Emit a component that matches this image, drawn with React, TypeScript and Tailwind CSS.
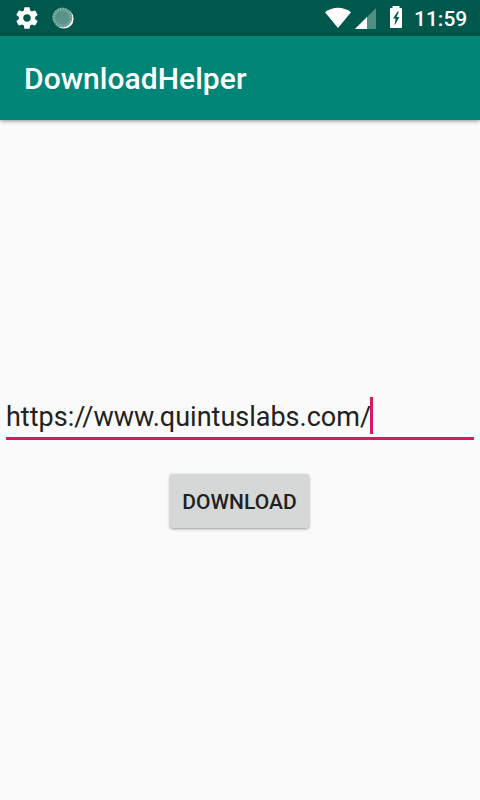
function SettingsIcon() {
  return (
    <svg className="ml-[14px] h-[26px] w-[26px] shrink-0" viewBox="0 0 24 24" fill="#fff">
      <path d="M19.43 12.98c.04-.32.07-.64.07-.98s-.03-.66-.07-.98l2.11-1.65c.19-.15.24-.42.12-.64l-2-3.46c-.12-.22-.39-.3-.61-.22l-2.49 1c-.52-.4-1.08-.73-1.69-.98l-.38-2.65C14.46 2.18 14.25 2 14 2h-4c-.25 0-.46.18-.49.42l-.38 2.65c-.61.25-1.17.59-1.69.98l-2.49-1c-.23-.09-.49 0-.61.22l-2 3.46c-.13.22-.07.49.12.64l2.11 1.65c-.04.32-.07.65-.07.98s.03.66.07.98l-2.11 1.65c-.19.15-.24.42-.12.64l2 3.46c.12.22.39.3.61.22l2.49-1c.52.4 1.08.73 1.69.98l.38 2.65c.03.24.24.42.49.42h4c.25 0 .46-.18.49-.42l.38-2.65c.61-.25 1.17-.59 1.69-.98l2.49 1c.23.09.49 0 .61-.22l2-3.46c.12-.22.07-.49-.12-.64l-2.11-1.65zM12 15.5c-1.93 0-3.500-1.570-3.500-3.500s1.570-3.500 3.500-3.500 3.500 1.570 3.500 3.500-1.570 3.500-3.500 3.500z" />
    </svg>
  );
}

function SyncIcon() {
  return (
    <svg className="ml-[11px] h-[24px] w-[24px] shrink-0" viewBox="0 0 24 24">
      <circle cx="12.800" cy="12.800" r="9.800" fill="#fff" />
      <circle cx="11.300" cy="11.500" r="10" fill="#5a9488" />
      <circle cx="11.300" cy="11.500" r="8.300" fill="none" stroke="#8fb8b0" strokeWidth="2.600" strokeDasharray="1.100 1.507" />
    </svg>
  );
}

function StatusIcons() {
  return (
    <svg className="h-9 w-[84px] shrink-0" viewBox="324 0 84 36">
      <path d="M325 12.200C332.500 6.100 343.500 6.100 351 12.200L338 28Z" fill="#fff" />
      <path d="M376 8V29H355Z" fill="#4f8e83" />
      <path d="M367 17V29H355Z" fill="#fff" />
      <path
        fillRule="evenodd"
        d="M392.500 6h7v2h1.500q1 0 1 1v18q0 1-1 1h-10q-1 0-1-1v-18q0-1 1-1h1.500ZM397.700 11.500L393 18.500H395.600L394.500 25.500L399.400 17H396.600L398.900 11.500Z"
        fill="#fff"
      />
    </svg>
  );
}

export default function App() {
  return (
    <div className="flex h-[800px] w-[480px] flex-col overflow-hidden bg-[#fafafa] font-['Roboto','Liberation_Sans',sans-serif]">
      <div className="flex h-9 shrink-0 items-center bg-[#00574b] text-white">
        <SettingsIcon />
        <SyncIcon />
        <div className="ml-auto flex items-center">
          <StatusIcons />
          <span className="ml-[6px] w-[66px] whitespace-nowrap pt-[2px] text-[21px] leading-[34px] font-medium">11:59</span>
        </div>
      </div>
      <header className="flex h-[84px] shrink-0 items-center bg-[#008577] pt-[2px] pl-6 shadow-[0_1px_4px_rgba(0,0,0,0.45)]">
        <h1 className="text-[30px] leading-[36px] font-medium tracking-[0.05px] text-white">DownloadHelper</h1>
      </header>
      <main className="flex flex-col items-center px-[6px] pt-[277px]">
        <div className="flex h-[43px] w-full items-start border-b-[3px] border-[#d81b60] text-[27px] leading-[40px] text-[#212121]">
          <span className="whitespace-nowrap">https://www.quintuslabs.com/</span>
          <span className="-ml-px h-[37px] w-[3px] shrink-0 bg-[#d81b60]" />
        </div>
        <button className="mt-[34px] mr-px h-[54px] w-[139px] rounded-[3px] bg-[#d6d7d7] pt-px text-[21px] leading-[54px] font-medium tracking-[0.05px] text-[#212121] shadow-[0_1px_3px_rgba(0,0,0,0.4)]">
          DOWNLOAD
        </button>
      </main>
    </div>
  );
}
